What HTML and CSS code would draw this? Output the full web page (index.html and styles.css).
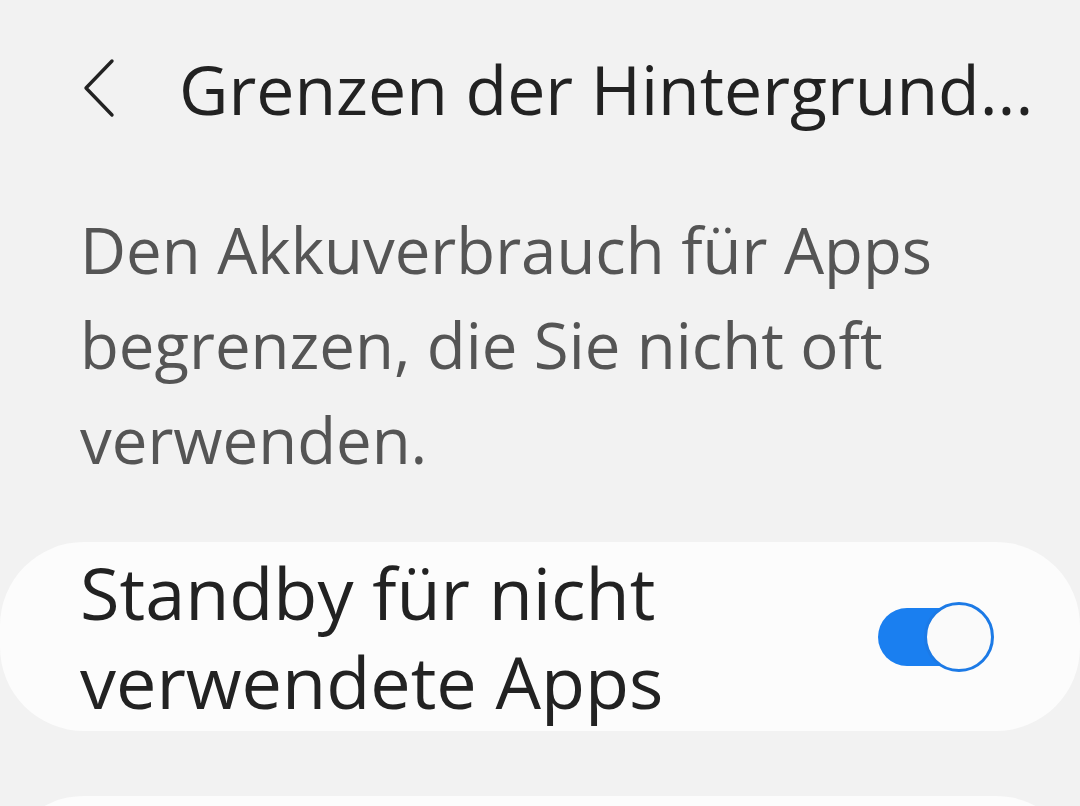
FILE: index.html
```html
<!DOCTYPE html>
<html lang="de">
<head>
    <meta charset="UTF-8">
    <title>Grenzen der Hintergrundnutzung</title>
    <link rel="stylesheet" href="styles.css">
</head>
<body>
    <div class="header">
        <button class="back" aria-label="Zurück">
            <svg width="34" height="62" viewBox="0 0 34 62">
                <polyline points="30,4 4,31 30,58" fill="none" stroke="#222" stroke-width="3.4" stroke-linecap="round" stroke-linejoin="round"/>
            </svg>
        </button>
        <h1 class="title">Grenzen der Hintergrund...</h1>
    </div>

    <p class="desc">Den Akkuverbrauch für Apps begrenzen, die Sie nicht oft verwenden.</p>

    <div class="card">
        <div class="card-label">Standby für nicht verwendete Apps</div>
        <div class="switch on">
            <div class="knob"></div>
        </div>
    </div>

    <div class="card next"></div>
</body>
</html>
```

FILE: styles.css
```css
body {
    margin: 0;
    background: #f2f2f2;
    font-family: "Open Sans", "Noto Sans", sans-serif;
    color: #222;
    overflow: hidden;
}

.header {
    display: flex;
    align-items: center;
    height: 124px;
    padding-top: 52px;
    padding-left: 82px;
    box-sizing: border-box;
}

.back {
    display: flex;
    padding: 0;
    border: none;
    background: none;
    margin-right: 63px;
}

.title {
    margin: 0;
    font-size: 68px;
    font-weight: 400;
    white-space: nowrap;
    color: #222;
}

.desc {
    margin: 78px 0 0;
    padding: 0 100px 0 80px;
    font-size: 63.5px;
    line-height: 95px;
    color: #555;
}

.card {
    display: flex;
    align-items: center;
    justify-content: space-between;
    margin-top: 55px;
    height: 189px;
    padding: 0 98px 0 80px;
    background: #fcfcfc;
    border-radius: 84px;
}

.card-label {
    width: 700px;
    font-size: 72px;
    line-height: 89px;
    color: #222;
}

.switch {
    position: relative;
    width: 104px;
    height: 58px;
    border-radius: 29px;
    background: #1a7ff0;
}

.knob {
    position: absolute;
    top: -6px;
    right: -12px;
    width: 64px;
    height: 64px;
    border-radius: 50%;
    background: #fafafa;
    border: 3px solid #1c7ae6;
}

.card.next {
    margin-top: 65px;
}
```
